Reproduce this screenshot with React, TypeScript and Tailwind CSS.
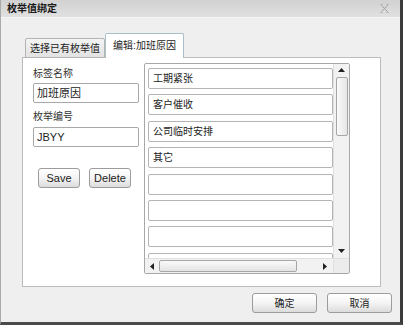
import React from "react";

const font = { fontFamily: '"Liberation Sans", "Noto Sans CJK SC", sans-serif' };

function Btn({ children, w, cls = "" }: { children: React.ReactNode; w: string; cls?: string }) {
  return (
    <div
      className={`${w} h-[20px] flex items-center justify-center rounded-[3px] border border-[#9c9c9c] bg-gradient-to-b from-[#ffffff] via-[#f4f4f4] to-[#dcdcdc] text-[#222] shadow-[inset_0_1px_0_#ffffff] ${cls}`}
    >
      {children}
    </div>
  );
}

function Row({ text }: { text?: string }) {
  return (
    <div className="h-[21px] shrink-0 border border-[#b4b4b4] rounded-[2px] bg-white flex items-center pl-[4px] text-[10px] text-[#222]">
      {text}
    </div>
  );
}

export default function App() {
  const items = ["工期紧张", "客户催收", "公司临时安排", "其它", "", "", "", ""];
  return (
    <div className="w-[408px] h-[327px] bg-white overflow-hidden" style={font}>
      <div className="w-[403px] h-[325px] flex flex-col border-l border-[#a9a9a9] border-r-[3px] border-r-[#3c3c3c] border-b-[3px] border-b-[#4a4a4a]">
        {/* title bar */}
        <div className="h-[18px] shrink-0 flex items-center justify-between pl-[6px] pr-[11px] bg-gradient-to-b from-[#d2d2d2] to-[#e0e0e0] border-b border-[#f4f4f4]">
          <span className="text-[10px] font-bold text-[#1a1a1a]">枚举值绑定</span>
          <svg width="9" height="9" viewBox="0 0 9 9" className="text-[#a0a0a0]">
            <path d="M1.5 1.5 L7.5 7.5 M7.5 1.5 L1.5 7.5" stroke="currentColor" strokeWidth="1" fill="none" />
            <path d="M0.5 0.5 h2 M6.5 0.5 h2 M0.5 8.5 h2 M6.5 8.5 h2" stroke="currentColor" strokeWidth="0.8" />
          </svg>
        </div>
        {/* body */}
        <div className="flex-1 flex flex-col bg-[#efefef] pl-[21px] pr-[8px] pt-[16px]">
          {/* tabs */}
          <div className="h-[24px] shrink-0 flex items-end pl-[3px] relative z-10 -mb-px">
            <div className="w-[80px] h-[20px] border border-[#b4b4b4] rounded-t-[2px] bg-gradient-to-b from-[#f4f4f4] to-[#e2e2e2] flex items-center justify-center text-[10px] text-[#222]">
              选择已有枚举值
            </div>
            <div className="w-[79px] h-[25px] border border-[#a9bfc9] border-b-0 rounded-t-[2px] bg-white flex items-center justify-center text-[10px] text-[#222] pb-[2px]">
              编辑:加班原因
            </div>
          </div>
          {/* panel */}
          <div className="h-[230px] shrink-0 mr-[11px] bg-white border border-[#bcbcbc] flex pl-[10px] pt-[5px]">
            {/* left column */}
            <div className="w-[106px] shrink-0 flex flex-col pt-[3px]">
              <div className="h-[14px] flex items-center text-[10px] text-[#333]">标签名称</div>
              <div className="mt-[3px] h-[20px] border border-[#a8a8a8] rounded-[2px] bg-white flex items-center pl-[3px] text-[11px] text-[#222]">
                加班原因
              </div>
              <div className="mt-[6px] h-[14px] flex items-center text-[10px] text-[#333]">枚举编号</div>
              <div className="mt-[4px] h-[20px] border border-[#a8a8a8] rounded-[2px] bg-white flex items-center pl-[3px] text-[11px] text-[#222]">
                JBYY
              </div>
              <div className="mt-[21px] flex pl-[5px] gap-[9px] text-[11px]">
                <Btn w="w-[42px]">Save</Btn>
                <Btn w="w-[42px]">Delete</Btn>
              </div>
            </div>
            {/* list box */}
            <div className="ml-[5px] w-[206px] h-[211px] shrink-0 border border-[#a8a8a8] rounded-[2px] bg-white flex flex-col">
              <div className="flex-1 flex min-h-0">
                <div className="flex-1 overflow-hidden flex flex-col gap-[5.4px] pl-[3px] pt-[4px]">
                  {items.map((t, i) => (
                    <Row key={i} text={t} />
                  ))}
                </div>
                {/* vertical scrollbar */}
                <div className="w-[16px] shrink-0 bg-[#f2f2f2] border-l border-[#e0e0e0] flex flex-col items-center">
                  <svg width="7" height="4" viewBox="0 0 7 4" className="mt-[4px]">
                    <path d="M3.5 0 L7 4 L0 4 Z" fill="#222" />
                  </svg>
                  <div className="mt-[5px] w-[12px] h-[59px] rounded-[2px] border border-[#a6a6a6] bg-gradient-to-r from-[#fafafa] to-[#e6e6e6]" />
                  <div className="flex-1" />
                  <svg width="7" height="4" viewBox="0 0 7 4" className="mb-[5px]">
                    <path d="M0 0 L7 0 L3.5 4 Z" fill="#222" />
                  </svg>
                </div>
              </div>
              {/* horizontal scrollbar */}
              <div className="h-[15px] shrink-0 flex border-t border-[#e0e0e0]">
                <div className="flex-1 bg-[#f2f2f2] flex items-center pl-[5px] pr-[6px]">
                  <svg width="4" height="7" viewBox="0 0 4 7">
                    <path d="M0 3.5 L4 0 L4 7 Z" fill="#222" />
                  </svg>
                  <div className="ml-[5px] w-[138px] h-[12px] rounded-[2px] border border-[#a6a6a6] bg-gradient-to-b from-[#fafafa] to-[#e4e4e4]" />
                  <div className="flex-1" />
                  <svg width="4" height="7" viewBox="0 0 4 7">
                    <path d="M0 0 L4 3.5 L0 7 Z" fill="#222" />
                  </svg>
                </div>
                <div className="w-[16px] shrink-0 bg-[#ececec] border-l border-[#e0e0e0]" />
              </div>
            </div>
          </div>
          {/* footer */}
          <div className="mt-[6px] flex justify-end gap-[10px] text-[10px]">
            <Btn w="w-[65px]">确定</Btn>
            <Btn w="w-[65px]">取消</Btn>
          </div>
        </div>
      </div>
    </div>
  );
}
